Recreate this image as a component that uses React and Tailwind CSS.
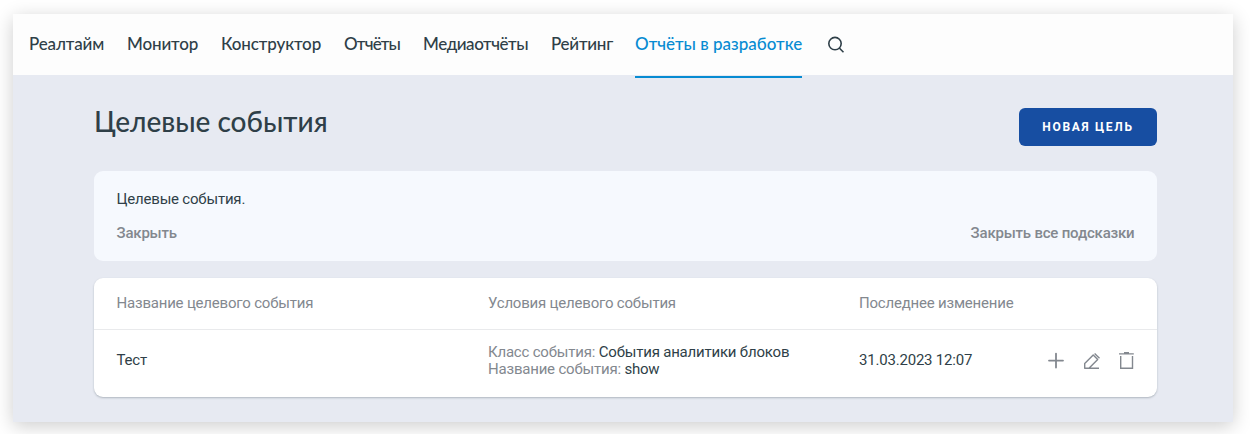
const navItems = [
  { label: "Реалтайм", box: "w-[75px]", track: "tracking-[-0.15px]" },
  { label: "Монитор", box: "w-[71px]", track: "tracking-[-0.15px]" },
  { label: "Конструктор", box: "w-[100px]", track: "tracking-[-0.12px]" },
  { label: "Отчёты", box: "w-[56px]", track: "tracking-[-0.8px]" },
  { label: "Медиаотчёты", box: "w-[105px]", track: "tracking-[-0.45px]" },
  { label: "Рейтинг", box: "w-[61px]", track: "tracking-[-0.25px]" },
];

function SearchIcon() {
  return (
    <svg width="18" height="18" viewBox="0 0 18 18" fill="none" stroke="#2f3f48" strokeWidth="1.6">
      <circle cx="8" cy="7.6" r="6.2" />
      <path d="M12.3 12l4.2 4.2" />
    </svg>
  );
}

function PlusIcon() {
  return (
    <svg width="18" height="18" viewBox="0 0 18 18" fill="none" stroke="#83888f" strokeWidth="1.8" strokeLinecap="round">
      <path d="M9 1.6v14M2 8.6h14" />
    </svg>
  );
}

function EditIcon() {
  return (
    <svg width="18" height="18" viewBox="0 0 18 18" fill="none" stroke="#83888f" strokeWidth="1.4" strokeLinejoin="round">
      <path d="M1.7 16.3V11.6L10.2 3.1l4.5 4.5-8.7 8.7M1.2 16.3H16" />
      <path d="M11.6 1.4l4.9 4.9" />
    </svg>
  );
}

function TrashIcon() {
  return (
    <svg width="18" height="18" viewBox="0 0 18 18" fill="none" stroke="#83888f" strokeWidth="1.4">
      <path d="M2.7 4v12.3h11.8V4" />
      <path d="M1 1.9h14.8M6 .8h5" />
    </svg>
  );
}

export default function App() {
  return (
    <div className="h-[434px] w-[1250px] overflow-hidden bg-white pt-[14px] pl-[13px] font-['Roboto','Liberation_Sans',sans-serif] text-[15px] leading-[17px] tracking-[-0.2px] text-[#2f3f48]">
      <div className="h-[408px] w-[1220px] bg-[#e7eaf2] shadow-[0_4px_18px_rgba(0,0,0,0.2)]">
        <header className="flex h-[61px] gap-[23px] bg-[#fdfdfd] pl-4 font-['Lato','Liberation_Sans',sans-serif] text-[17px] font-medium leading-[60px] whitespace-nowrap">
          {navItems.map((item) => (
            <a key={item.label} className={`${item.box} ${item.track}`}>
              {item.label}
            </a>
          ))}
          <a className="h-[64px] w-[167px] border-b-2 border-[#078bd2] tracking-normal text-[#078bd2]">
            Отчёты в разработке
          </a>
          <span className="pt-[22px] pl-[2px]">
            <SearchIcon />
          </span>
        </header>

        <main className="ml-[81px] w-[1063px]">
          <div className="flex h-[96px] justify-between pt-[33px]">
            <h1 className="font-['Lato','Liberation_Sans',sans-serif] text-[28px] font-medium leading-[27px] tracking-normal whitespace-nowrap">
              Целевые события
            </h1>
            <button className="h-[38px] w-[138px] rounded-md bg-[#174ea2] text-[12px] font-bold tracking-[1.7px] text-white">
              НОВАЯ ЦЕЛЬ
            </button>
          </div>

          <section className="h-[90px] rounded-[9px] bg-[#f6f9fe] px-[22.5px] pt-[20px]">
            <p>Целевые события.</p>
            <div className="flex justify-between pt-[17px] font-medium text-[#83888f]">
              <button>Закрыть</button>
              <button>Закрыть все подсказки</button>
            </div>
          </section>

          <section className="mt-[17px] h-[119px] rounded-[9px] bg-white shadow-[0_1px_2px_rgba(47,63,74,0.3)]">
            <div className="flex h-[52px] items-center border-b border-[#e9eaec] pl-[22.5px] text-[#83888f]">
              <div className="w-[371.5px]">Название целевого события</div>
              <div className="w-[371px]">Условия целевого события</div>
              <div>Последнее изменение</div>
            </div>
            <div className="flex h-[61px] items-center pl-[22.5px]">
              <div className="w-[371.5px]">Тест</div>
              <div className="w-[371px]">
                <p><span className="text-[#83888f]">Класс события:</span> События аналитики блоков</p>
                <p><span className="text-[#83888f]">Название события:</span> show</p>
              </div>
              <div className="w-[188px]">31.03.2023 12:07</div>
              <div className="flex gap-[18px] pt-px">
                <PlusIcon />
                <EditIcon />
                <span className="-ml-px"><TrashIcon /></span>
              </div>
            </div>
          </section>
        </main>
      </div>
    </div>
  );
}
